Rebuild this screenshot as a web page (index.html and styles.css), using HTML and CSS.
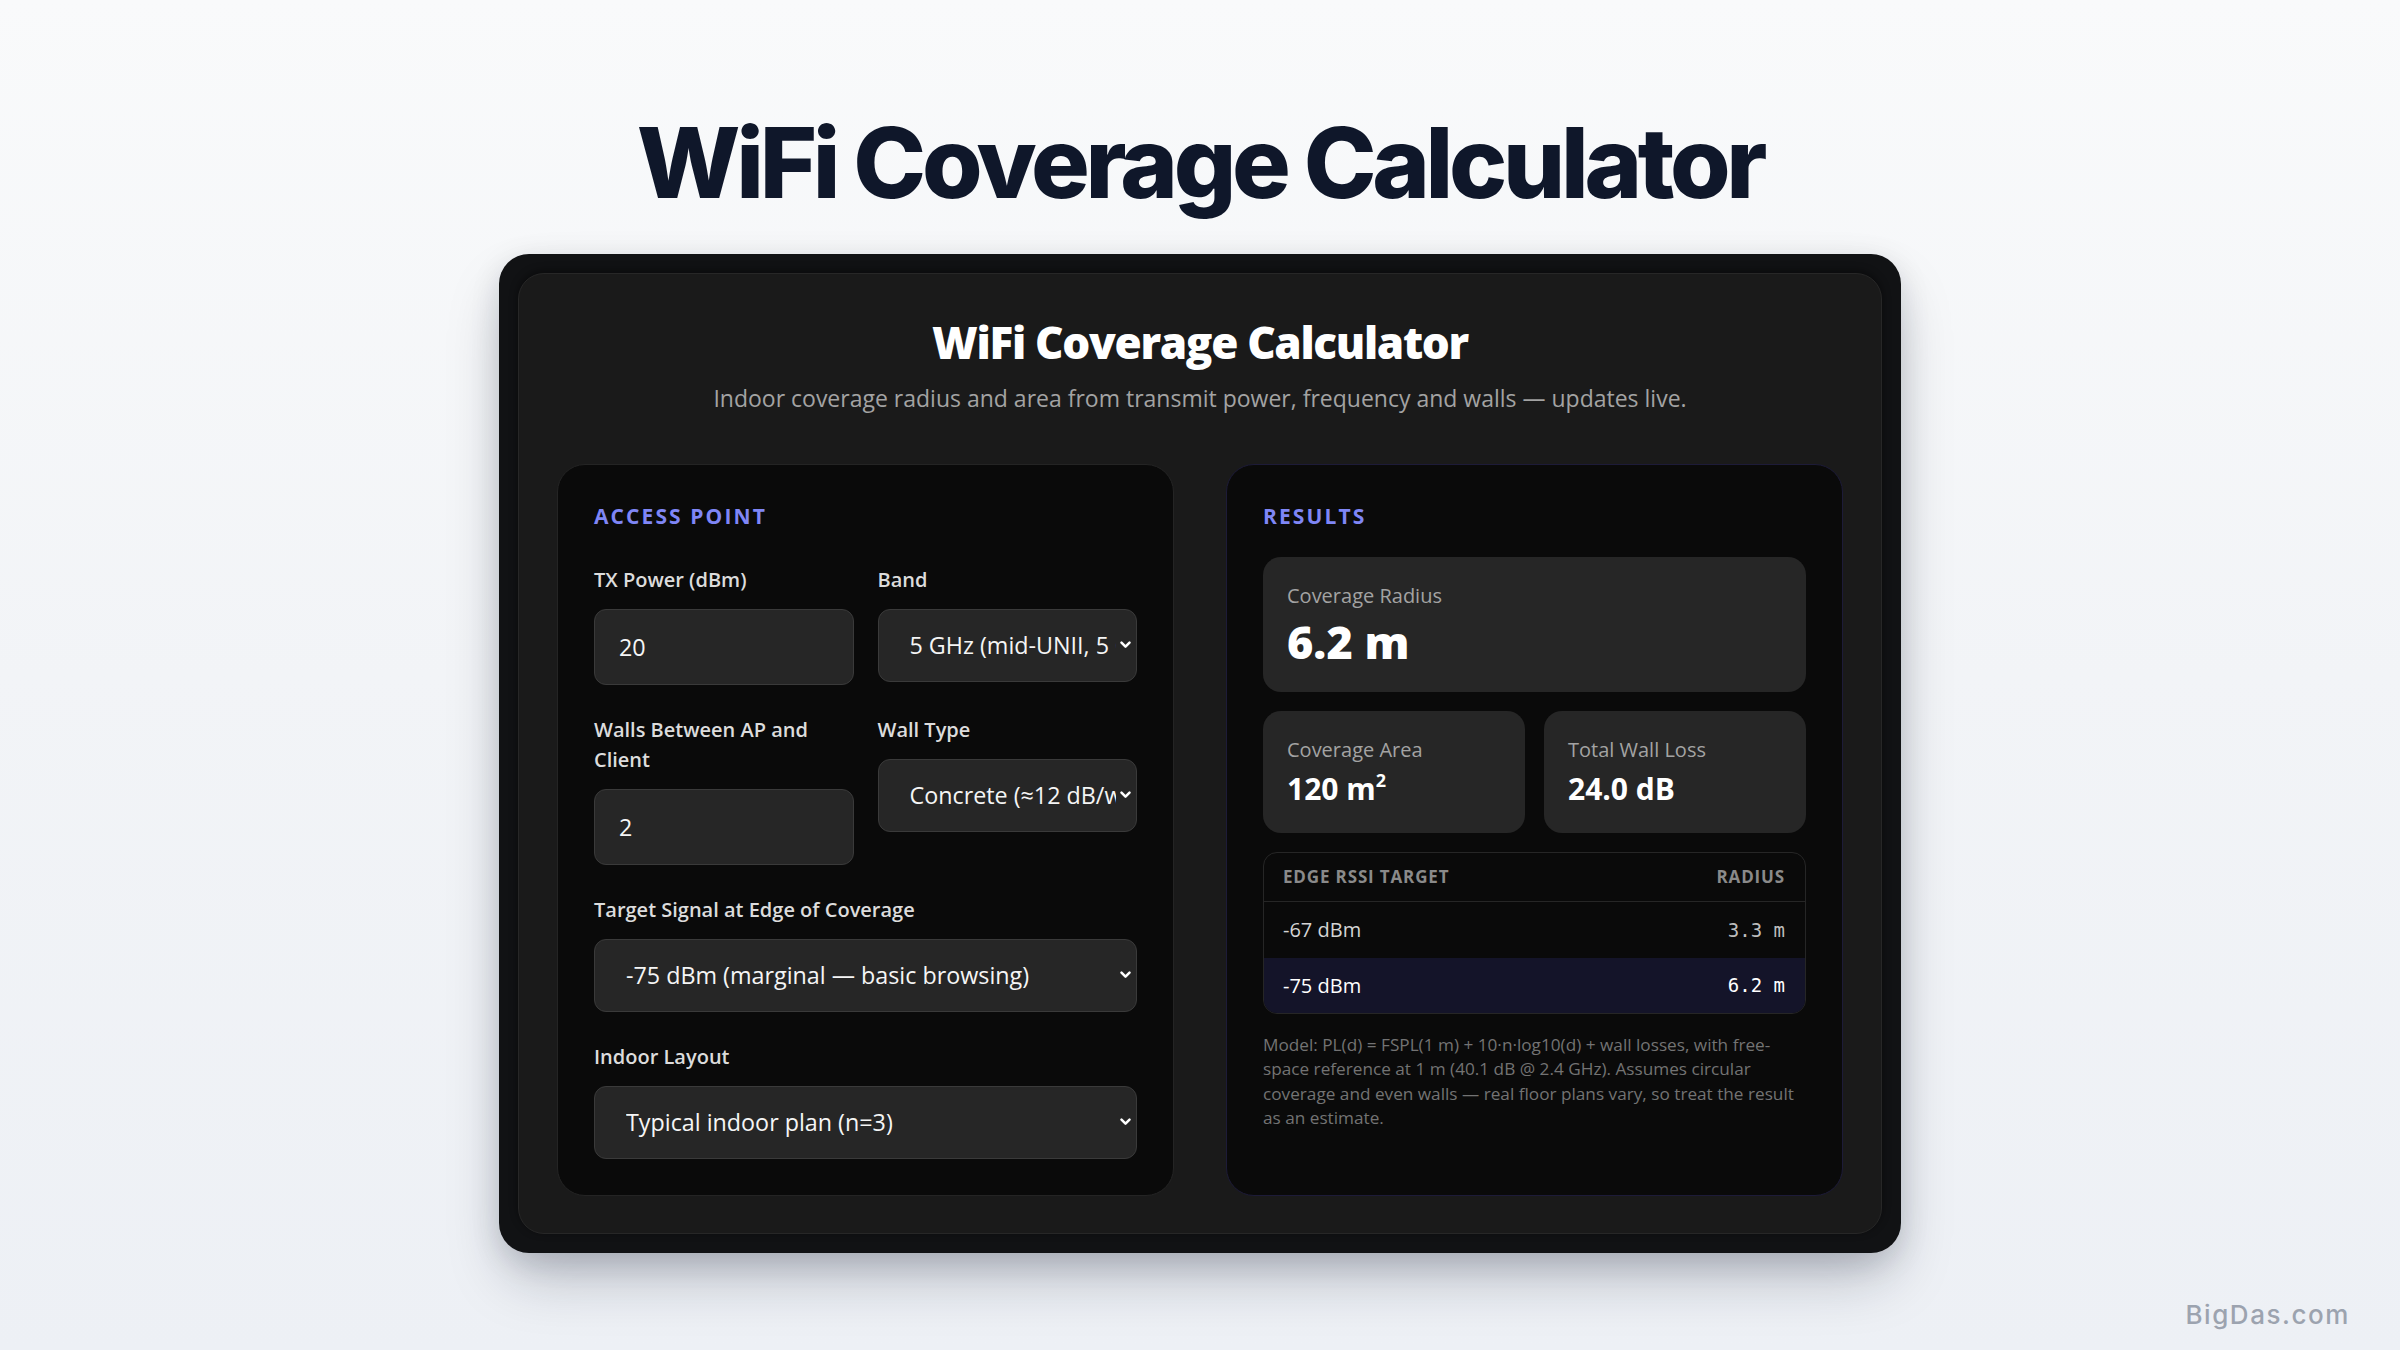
FILE: index.html
```html
<!DOCTYPE html>
<html lang="en">
<head>
<meta charset="utf-8">
<title>WiFi Coverage Calculator</title>
<link rel="stylesheet" href="styles.css">
</head>
<body>
<div class="page">
  <h1 class="page-title">WiFi Coverage Calculator</h1>
  <div class="frame">
    <div class="card">
      <header class="card-head">
        <h2 class="card-title">WiFi Coverage Calculator</h2>
        <p class="card-sub">Indoor coverage radius and area from transmit power, frequency and walls — updates live.</p>
      </header>
      <div class="panels">
        <section class="panel panel-left">
          <h3 class="section-title section-title-left">Access Point</h3>
          <div class="fields">
            <label class="field">
              <span class="field-label">TX Power (dBm)</span>
              <input class="input" type="text" value="20">
            </label>
            <label class="field">
              <span class="field-label">Band</span>
              <span class="select-wrap">
                <select class="select">
                  <option>5 GHz (mid-UNII, 5 GHz)</option>
                </select>
                <svg class="chev" width="11" height="8" viewBox="0 0 11 8" aria-hidden="true"><path d="M1.5 1.6 L5.5 5.6 L9.5 1.6" fill="none" stroke="#ffffff" stroke-width="2.5" stroke-linecap="round" stroke-linejoin="round"/></svg>
              </span>
            </label>
            <label class="field">
              <span class="field-label">Walls Between AP and Client</span>
              <input class="input" type="text" value="2">
            </label>
            <label class="field">
              <span class="field-label">Wall Type</span>
              <span class="select-wrap">
                <select class="select">
                  <option>Concrete (≈12 dB/wall)</option>
                </select>
                <svg class="chev" width="11" height="8" viewBox="0 0 11 8" aria-hidden="true"><path d="M1.5 1.6 L5.5 5.6 L9.5 1.6" fill="none" stroke="#ffffff" stroke-width="2.5" stroke-linecap="round" stroke-linejoin="round"/></svg>
              </span>
            </label>
            <label class="field field-wide">
              <span class="field-label">Target Signal at Edge of Coverage</span>
              <span class="select-wrap">
                <select class="select">
                  <option>-75 dBm (marginal — basic browsing)</option>
                </select>
                <svg class="chev" width="11" height="8" viewBox="0 0 11 8" aria-hidden="true"><path d="M1.5 1.6 L5.5 5.6 L9.5 1.6" fill="none" stroke="#ffffff" stroke-width="2.5" stroke-linecap="round" stroke-linejoin="round"/></svg>
              </span>
            </label>
            <label class="field field-wide">
              <span class="field-label">Indoor Layout</span>
              <span class="select-wrap">
                <select class="select">
                  <option>Typical indoor plan (n=3)</option>
                </select>
                <svg class="chev" width="11" height="8" viewBox="0 0 11 8" aria-hidden="true"><path d="M1.5 1.6 L5.5 5.6 L9.5 1.6" fill="none" stroke="#ffffff" stroke-width="2.5" stroke-linecap="round" stroke-linejoin="round"/></svg>
              </span>
            </label>
          </div>
        </section>
        <section class="panel panel-right">
          <h3 class="section-title">Results</h3>
          <div class="results">
            <div class="stat stat-big">
              <div class="stat-label">Coverage Radius</div>
              <div class="stat-value stat-value-big">6.2 m</div>
            </div>
            <div class="stat-row">
              <div class="stat">
                <div class="stat-label">Coverage Area</div>
                <div class="stat-value">120 m<sup>2</sup></div>
              </div>
              <div class="stat">
                <div class="stat-label">Total Wall Loss</div>
                <div class="stat-value">24.0 dB</div>
              </div>
            </div>
            <div class="table">
              <div class="trow thead">
                <span>Edge RSSI Target</span>
                <span>Radius</span>
              </div>
              <div class="trow">
                <span>-67 dBm</span>
                <span class="mono">3.3 m</span>
              </div>
              <div class="trow trow-active">
                <span>-75 dBm</span>
                <span class="mono">6.2 m</span>
              </div>
            </div>
            <p class="note">Model: PL(d) = FSPL(1 m) + 10·n·log10(d) + wall losses, with free-space reference at 1 m (40.1 dB @ 2.4 GHz). Assumes circular coverage and even walls — real floor plans vary, so treat the result as an estimate.</p>
          </div>
        </section>
      </div>
    </div>
  </div>
</div>
<div class="watermark">BigDas.com</div>
</body>
</html>
```
FILE: styles.css
```css
* { box-sizing: border-box; }

html, body {
  margin: 0;
  padding: 0;
}

body {
  min-height: 1350px;
  background: linear-gradient(180deg, #f9fafb 0%, #f2f4f7 50%, #edf0f5 100%);
  font-family: "Open Sans", "Noto Sans", sans-serif;
  color: #e5e5e5;
}

.page {
  display: flex;
  flex-direction: column;
  align-items: center;
  padding-top: 109px;
}

.page-title {
  margin: 0 0 37px;
  font-family: Inter, "Open Sans", sans-serif;
  font-weight: 800;
  font-size: 98px;
  line-height: 1.1;
  letter-spacing: -0.044em;
  color: #0f172a;
}

.frame {
  width: 1402px;
  padding: 19px;
  background: #111214;
  border-radius: 30px;
  box-shadow: 0 30px 60px -10px rgba(15, 23, 42, 0.28), 0 8px 30px rgba(15, 23, 42, 0.12);
}

.card {
  background: #1a1a1a;
  border: 1px solid #272727;
  border-radius: 26px;
  padding: 42px 38px 37px;
  box-shadow: 0 -2px 8px rgba(0, 0, 0, 0.45);
}

.card-head {
  text-align: center;
}

.card-title {
  margin: 0;
  font-weight: 800;
  font-size: 44px;
  line-height: 1.2;
  letter-spacing: -0.03em;
  color: #ffffff;
}

.card-sub {
  margin: 13px 0 0;
  font-size: 23px;
  line-height: 33px;
  color: #a3a3a3;
}

.panels {
  margin-top: 49px;
  display: grid;
  grid-template-columns: 1fr 1fr;
  gap: 52px;
}

.panel {
  background: #0a0a0a;
  border: 1px solid #242424;
  border-radius: 28px;
  padding: 36px;
}

.panel-right {
  border-color: #1d1b38;
}

.section-title {
  margin: 0 0 26px;
  font-size: 21px;
  line-height: 30px;
  font-weight: 700;
  letter-spacing: 0.1em;
  text-transform: uppercase;
  color: #7f86f6;
}

.section-title-left {
  margin-bottom: 34px;
}

.fields {
  display: grid;
  grid-template-columns: 1fr 1fr;
  column-gap: 24px;
  row-gap: 30px;
  align-items: start;
}

.field {
  display: flex;
  flex-direction: column;
  gap: 14px;
}

.field-wide {
  grid-column: 1 / -1;
}

.field-label {
  font-size: 20px;
  line-height: 30px;
  font-weight: 600;
  color: #dcdcdc;
}

.input,
.select {
  width: 100%;
  margin: 0;
  background: #262626;
  border: 1px solid #3a3a3a;
  border-radius: 12px;
  color: #f5f5f5;
  font-family: "Open Sans", "Noto Sans", sans-serif;
  font-size: 23.3px;
  outline: none;
  color-scheme: dark;
}

.input {
  height: 76px;
  padding: 0 24px;
}

.select-wrap {
  position: relative;
  display: block;
}

.select {
  display: block;
  height: 73px;
  padding: 0 20px 0 31px;
  appearance: none;
  -webkit-appearance: none;
}

.chev {
  position: absolute;
  right: 6px;
  top: 50%;
  margin-top: -4px;
  pointer-events: none;
}

.results {
  display: flex;
  flex-direction: column;
  gap: 19px;
}

.stat {
  background: #262626;
  border-radius: 18px;
  padding: 24px;
}

.stat-label {
  font-size: 20px;
  line-height: 30px;
  color: #a3a3a3;
  margin-bottom: 4px;
}

.stat-value {
  font-size: 30px;
  line-height: 40px;
  font-weight: 700;
  color: #ffffff;
}

.stat-value sup {
  font-size: 0.6em;
  line-height: 0;
  vertical-align: 0.7em;
}

.stat-value-big {
  font-size: 45px;
  line-height: 53px;
  font-weight: 800;
}

.stat-row {
  display: grid;
  grid-template-columns: 1fr 1fr;
  gap: 19px;
}

.table {
  border: 1px solid #262626;
  border-radius: 14px;
  overflow: hidden;
}

.trow {
  display: flex;
  justify-content: space-between;
  align-items: center;
  height: 56px;
  padding: 0 20px 0 19px;
  font-size: 20px;
  color: #d4d4d4;
}

.thead {
  height: 49px;
  border-bottom: 1px solid #262626;
  font-size: 17px;
  font-weight: 700;
  letter-spacing: 0.05em;
  text-transform: uppercase;
  color: #8a8a8a;
}

.trow-active {
  height: 55px;
  background: #141429;
  color: #ffffff;
}

.mono {
  font-family: "DejaVu Sans Mono", "Liberation Mono", monospace;
  font-size: 19px;
  color: #bdbdbd;
}

.trow-active .mono {
  color: #ffffff;
}

.note {
  margin: 0;
  font-size: 17.2px;
  line-height: 24.5px;
  color: #737373;
}

.watermark {
  position: absolute;
  right: 50px;
  bottom: 20px;
  font-family: Inter, "Open Sans", sans-serif;
  font-weight: 500;
  font-size: 26px;
  line-height: 1.2;
  letter-spacing: 0.06em;
  color: #9ca3af;
}
```
